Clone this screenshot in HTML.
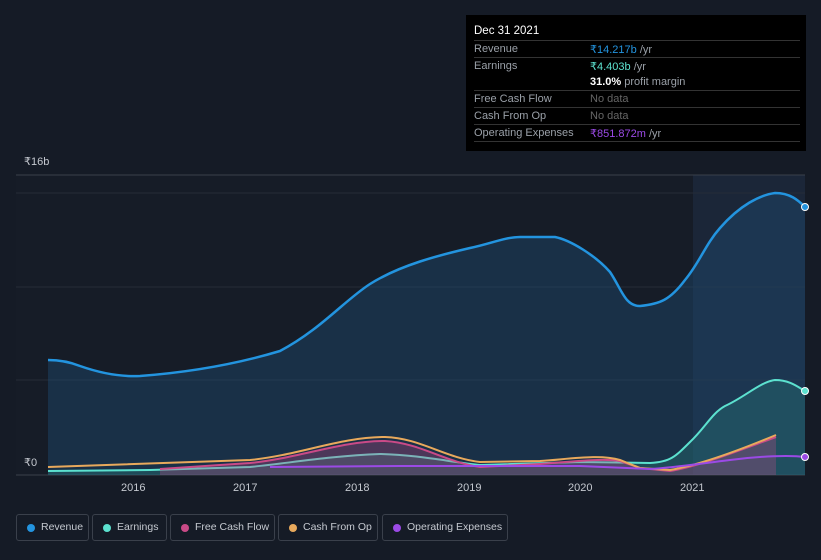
<!DOCTYPE html>
<html><head><style>
body{margin:0;width:821px;height:560px;background:#151b26;font-family:"Liberation Sans",sans-serif;overflow:hidden;position:relative}
.tt{position:absolute;left:466px;top:15px;width:340px;height:136px;background:#000;color:#fff;font-size:11px}
.tt .h{position:absolute;left:8px;top:10px;font-size:11.5px}
.row{position:absolute;left:8px;width:326px;border-top:1px solid #333;height:16px}
.row span{position:absolute;top:2px;white-space:nowrap}
.l{left:0;color:#9aa0a8}.v{left:116px}
.leg{position:absolute;top:514px;height:27px;border:1px solid #3a404b;border-radius:3px;color:#c5c9d0;font-size:10.5px;line-height:25px;box-sizing:border-box;white-space:nowrap}
.leg i{position:absolute;left:10px;top:9px;width:8px;height:8px;border-radius:50%}
.leg span{position:absolute;left:24px}
.ax{position:absolute;color:#c5c9d0;font-size:11px}
</style></head><body>
<svg width="821" height="560" style="position:absolute;left:0;top:0">
<rect x="16" y="175" width="789" height="300" fill="#161c27"/>
<rect x="693" y="175" width="112" height="300" fill="#1b2638"/>
<line x1="16" y1="175" x2="805" y2="175" stroke="#3a404b"/>
<line x1="16" y1="193" x2="805" y2="193" stroke="#262c37"/>
<line x1="16" y1="287" x2="805" y2="287" stroke="#262c37"/>
<line x1="16" y1="380" x2="805" y2="380" stroke="#262c37"/>
<line x1="16" y1="475" x2="805" y2="475" stroke="#3a404b"/>
<path d="M48,360 C60,360 70,362 80,366 C100,373 120,377 140,376 C180,373 230,366 280,351 C320,330 345,300 370,284 C400,265 440,255 470,248 C490,244 505,237 520,237 L555,237 C570,240 595,255 610,272 C622,290 625,306 640,306 C660,304 670,300 685,280 C700,262 705,245 720,228 C740,205 760,195 775,193 C790,193 798,200 805,207 L805,475 L48,475 Z" fill="#1d4f78" fill-opacity="0.4"/>
<path d="M48,360 C60,360 70,362 80,366 C100,373 120,377 140,376 C180,373 230,366 280,351 C320,330 345,300 370,284 C400,265 440,255 470,248 C490,244 505,237 520,237 L555,237 C570,240 595,255 610,272 C622,290 625,306 640,306 C660,304 670,300 685,280 C700,262 705,245 720,228 C740,205 760,195 775,193 C790,193 798,200 805,207" fill="none" stroke="#2394df" stroke-width="2.5"/>
<path d="M48,471 L150,470 L250,467 C290,463 330,456 380,454 C420,455 450,462 480,465 L580,462 L650,463 C670,462 675,457 690,442 C705,428 712,413 725,406 C745,397 760,382 775,380 C790,380 798,387 805,391 L805,475 L48,475Z" fill="#2b8a86" fill-opacity="0.3"/>
<path d="M48,471 L150,470 L250,467 C290,463 330,456 380,454 C420,455 450,462 480,465 L580,462 L650,463 C670,462 675,457 690,442 C705,428 712,413 725,406 C745,397 760,382 775,380 C790,380 798,387 805,391" fill="none" stroke="#5ce1cf" stroke-width="2"/>
<path d="M160,469 L250,463 C300,458 340,441 385,441 C420,443 445,462 480,467 L540,464 C570,462 600,458 620,461 L640,468 L670,471 C700,466 740,450 776,437 L776,475 L160,475Z" fill="#c24a85" fill-opacity="0.3"/>
<path d="M160,469 L250,463 C300,458 340,441 385,441 C420,443 445,462 480,467 L540,464 C570,462 600,458 620,461 L640,468 L670,471 C700,466 740,450 776,437" fill="none" stroke="#c94a87" stroke-width="2"/>
<path d="M48,467 L250,460 C300,455 340,437 385,437 C420,438 445,458 480,462 L540,461 C570,459 600,454 620,460 L640,468 L670,470 C700,465 740,450 776,435" fill="none" stroke="#e8a95c" stroke-width="2"/>
<path d="M270,467 L400,466 L580,466 L650,469 C670,468 690,465 730,460 C760,456 790,455 805,457" fill="none" stroke="#9b4ae6" stroke-width="2"/>
<circle cx="805" cy="207" r="3.5" fill="#2394df" stroke="#fff"/>
<circle cx="805" cy="391" r="3.5" fill="#5ce1cf" stroke="#fff"/>
<circle cx="805" cy="457" r="3.5" fill="#9b4ae6" stroke="#fff"/>
</svg>
<div class="ax" style="left:24px;top:155px">₹16b</div>
<div class="ax" style="left:24px;top:456px">₹0</div>
<div class="ax" style="left:121px;top:482px">2016</div>
<div class="ax" style="left:233px;top:482px">2017</div>
<div class="ax" style="left:345px;top:482px">2018</div>
<div class="ax" style="left:457px;top:482px">2019</div>
<div class="ax" style="left:568px;top:482px">2020</div>
<div class="ax" style="left:680px;top:482px">2021</div>
<div class="tt">
<div class="h">Dec 31 2021</div>
<div class="row" style="top:25px"><span class="l">Revenue</span><span class="v"><b style="color:#2394df;font-weight:normal">₹14.217b</b> <span style="position:static;color:#9aa0a8">/yr</span></span></div>
<div class="row" style="top:42px;height:33px"><span class="l">Earnings</span><span class="v"><b style="color:#5ce1cf;font-weight:normal">₹4.403b</b> <span style="position:static;color:#9aa0a8">/yr</span></span><span class="v" style="top:18px"><b>31.0%</b> <span style="position:static;color:#9aa0a8">profit margin</span></span></div>
<div class="row" style="top:75px"><span class="l">Free Cash Flow</span><span class="v" style="color:#666">No data</span></div>
<div class="row" style="top:92px"><span class="l">Cash From Op</span><span class="v" style="color:#666">No data</span></div>
<div class="row" style="top:109px;border-bottom:1px solid #333"><span class="l">Operating Expenses</span><span class="v"><b style="color:#9b4ae6;font-weight:normal">₹851.872m</b> <span style="position:static;color:#9aa0a8">/yr</span></span></div>
</div>
<div class="leg" style="left:16px;width:73px"><i style="background:#2394df"></i><span>Revenue</span></div>
<div class="leg" style="left:92px;width:75px"><i style="background:#5ce1cf"></i><span>Earnings</span></div>
<div class="leg" style="left:170px;width:105px"><i style="background:#c94a87"></i><span>Free Cash Flow</span></div>
<div class="leg" style="left:278px;width:100px"><i style="background:#e8a95c"></i><span>Cash From Op</span></div>
<div class="leg" style="left:382px;width:126px"><i style="background:#9b4ae6"></i><span>Operating Expenses</span></div>
</body></html>
